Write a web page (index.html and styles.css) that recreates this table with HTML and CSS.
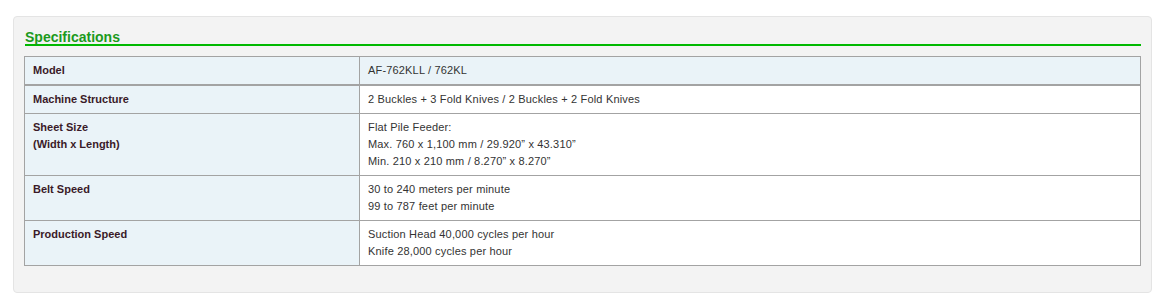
FILE: index.html
```html
<!DOCTYPE html>
<html>
<head>
  <title>Specifications</title>
  <link rel="stylesheet" href="styles.css">
</head>
<body>
  <div class="panel">
    <h2 class="spec-title">Specifications</h2>

    <!-- spec table -->
    <table class="spec-table">
      <tr class="model-row">
        <th>Model</th>
        <td>AF-762KLL / 762KL</td>
      </tr>
      <tr>
        <th>Machine Structure</th>
        <td>2 Buckles + 3 Fold Knives / 2 Buckles + 2 Fold Knives</td>
      </tr>
      <tr>
        <th>Sheet Size<br>(Width x Length)</th>
        <td>Flat Pile Feeder:<br>Max. 760 x 1,100 mm / 29.920” x 43.310”<br>Min. 210 x 210 mm / 8.270” x 8.270”</td>
      </tr>
      <tr>
        <th>Belt Speed</th>
        <td>30 to 240 meters per minute<br>99 to 787 feet per minute</td>
      </tr>
      <tr>
        <th>Production Speed</th>
        <td>Suction Head 40,000 cycles per hour<br>Knife 28,000 cycles per hour</td>
      </tr>
    </table>
  </div>
</body>
</html>
```

FILE: styles.css
```css
body {
  margin: 0;
  padding: 16px 14px 0 13px;
  background-color: #ffffff;
  font-family: "Liberation Sans", Arial, sans-serif;
}
.panel {
  background-color: #f3f3f3;
  border: 1px solid #e4e4e4;
  border-radius: 4px;
  padding: 13px 10px 27px 10px;
  height: 235px;
}
.spec-title {
  margin: 0 0 10px 1px;
  padding: 0;
  font-size: 14px;
  line-height: 14px;
  font-weight: bold;
  color: #1c9a1c;
  border-bottom: 2px solid #00b900; /* green rule */
}
.spec-table {
  width: 1117px;
  border-collapse: collapse;
  border: 1px solid #a3a3a3;
  font-size: 11px;
  line-height: 17px;
}
.spec-table th,
.spec-table td {
  text-align: left;
  vertical-align: top;
  padding: 5px 8px 5px 8px;
  border: 1px solid #a3a3a3;
}
.spec-table th {
  width: 318px;
  background-color: #eaf3f8;
  color: #3a1a28;
  font-weight: bold;
}
.spec-table td {
  background-color: #ffffff;
  color: #333333;
  letter-spacing: 0.17px;
}
.model-row th,
.model-row td {
  border-bottom: 2px solid #a3a3a3;
}
.model-row td {
  background-color: #eaf3f8;
}
```
